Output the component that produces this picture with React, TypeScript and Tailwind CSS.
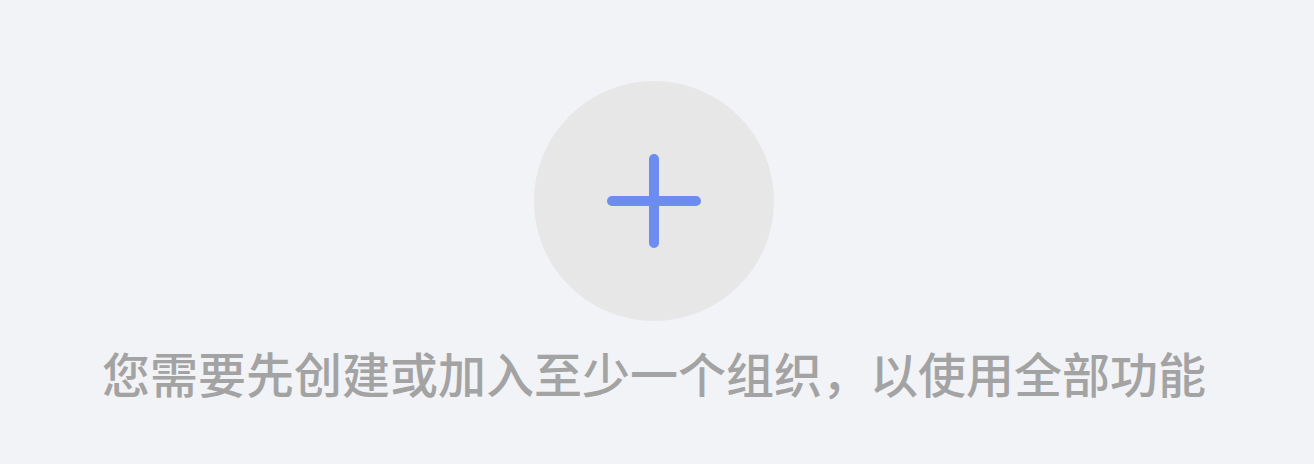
export default function App() {
  return (
    <div className="flex h-[464px] w-full flex-col items-center bg-[#f2f3f7] pr-[6px] pt-[81px]">
      <button
        type="button"
        className="flex h-[240px] w-[240px] items-center justify-center rounded-full bg-[#e7e7e8]"
      >
        <svg width="96" height="96" viewBox="0 0 96 96" fill="none">
          <path
            d="M48 6v84M6 48h84"
            stroke="#6c8cf0"
            strokeWidth="10"
            strokeLinecap="round"
          />
        </svg>
      </button>
      <p
        className="mt-[27px] text-[48px] font-medium leading-none text-[#a3a3a3]"
        style={{ fontFamily: '"Noto Sans CJK SC", "Noto Sans", sans-serif' }}
      >
        您需要先创建或加入至少一个组织，以使用全部功能
      </p>
    </div>
  );
}
